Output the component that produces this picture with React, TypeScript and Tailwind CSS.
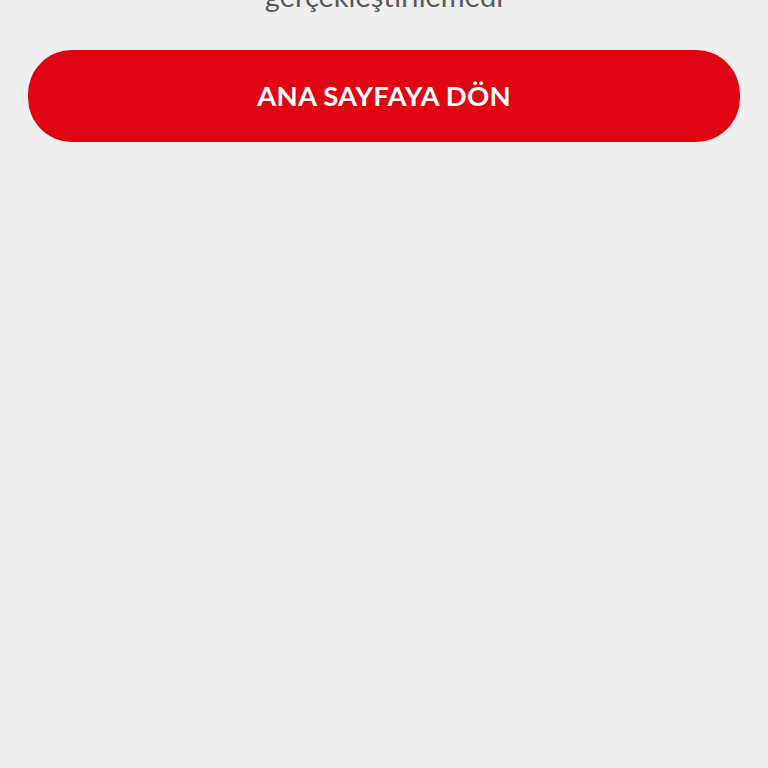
import React from "react";

export default function App() {
  return (
    <div className="min-h-[768px] w-full bg-[#efefef] px-[28px] overflow-hidden" style={{ fontFamily: "Lato, 'Open Sans', sans-serif" }}>
      <p className="-mt-[20px] h-[32px] text-center text-[29px] leading-[32px] text-[#5a5a5a]">
        gerçekleştirilemedi
      </p>
      <button className="mt-[38px] flex h-[92px] w-full items-center justify-center rounded-[44px] bg-[#e10513] text-[27.5px] font-bold tracking-[0.2px] text-white">
        ANA SAYFAYA DÖN
      </button>
    </div>
  );
}
